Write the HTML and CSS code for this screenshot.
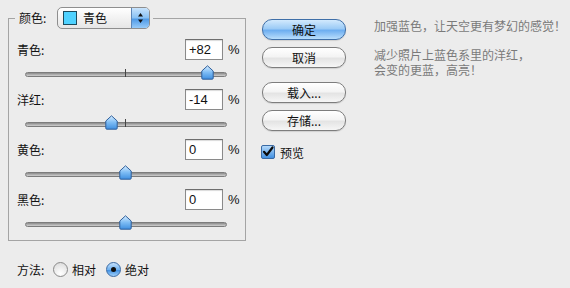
FILE: index.html
```html
<!DOCTYPE html>
<html>
<head>
<meta charset="utf-8">
<link rel="stylesheet" href="styles.css">
</head>
<body>
<div class="dialog">
  <div class="left">
    <fieldset class="group">
      <legend class="legend">
        <span class="legend-label">颜色:</span>
        <span class="popup">
          <span class="swatch"></span>
          <span class="popup-text">青色</span>
          <span class="popup-arrow">
            <svg width="17" height="22" viewBox="0 0 17 22"><path d="M8.5 6 L11 9.5 L6 9.5 Z" fill="#111"/><path d="M8.5 16 L11 12.5 L6 12.5 Z" fill="#111"/></svg>
          </span>
        </span>
      </legend>

      <div class="row">
        <div class="row-top"><span class="label">青色:</span><span class="input">+82</span><span class="pct">%</span></div>
        <div class="slider"><div class="track"></div><div class="tick"></div>
          <svg class="thumb" style="left:176px" width="13" height="15" viewBox="0 0 13 15"><defs><linearGradient id="g1" x1="0" y1="0" x2="0" y2="1"><stop offset="0" stop-color="#d6ecff"/><stop offset="0.5" stop-color="#7dbcf4"/><stop offset="1" stop-color="#3f8fe0"/></linearGradient></defs><path d="M6.5 0.8 L12.2 6 L12.2 13.2 Q12.2 14.2 11.2 14.2 L1.8 14.2 Q0.8 14.2 0.8 13.2 L0.8 6 Z" fill="url(#g1)" stroke="#2f5f9a" stroke-width="1"/></svg>
        </div>
      </div>

      <div class="row">
        <div class="row-top"><span class="label">洋红:</span><span class="input">-14</span><span class="pct">%</span></div>
        <div class="slider"><div class="track"></div><div class="tick"></div>
          <svg class="thumb" style="left:80px" width="13" height="15" viewBox="0 0 13 15"><path d="M6.5 0.8 L12.2 6 L12.2 13.2 Q12.2 14.2 11.2 14.2 L1.8 14.2 Q0.8 14.2 0.8 13.2 L0.8 6 Z" fill="url(#g1)" stroke="#2f5f9a" stroke-width="1"/></svg>
        </div>
      </div>

      <div class="row">
        <div class="row-top"><span class="label">黄色:</span><span class="input">0</span><span class="pct">%</span></div>
        <div class="slider"><div class="track"></div>
          <svg class="thumb" style="left:94px" width="13" height="15" viewBox="0 0 13 15"><path d="M6.5 0.8 L12.2 6 L12.2 13.2 Q12.2 14.2 11.2 14.2 L1.8 14.2 Q0.8 14.2 0.8 13.2 L0.8 6 Z" fill="url(#g1)" stroke="#2f5f9a" stroke-width="1"/></svg>
        </div>
      </div>

      <div class="row">
        <div class="row-top"><span class="label">黑色:</span><span class="input">0</span><span class="pct">%</span></div>
        <div class="slider"><div class="track"></div>
          <svg class="thumb" style="left:94px" width="13" height="15" viewBox="0 0 13 15"><path d="M6.5 0.8 L12.2 6 L12.2 13.2 Q12.2 14.2 11.2 14.2 L1.8 14.2 Q0.8 14.2 0.8 13.2 L0.8 6 Z" fill="url(#g1)" stroke="#2f5f9a" stroke-width="1"/></svg>
        </div>
      </div>
    </fieldset>

    <div class="method">
      <span class="label">方法:</span>
      <span class="radio"></span><span class="radio-label">相对</span>
      <span class="radio checked"><span class="dot"></span></span><span class="radio-label">绝对</span>
    </div>
  </div>

  <div class="buttons">
    <div class="btn default">确定</div>
    <div class="btn">取消</div>
    <div class="btn gap">载入...</div>
    <div class="btn">存储...</div>
    <div class="check-row">
      <svg class="checkbox" width="14" height="14" viewBox="0 0 14 14"><defs><linearGradient id="cb" x1="0" y1="0" x2="0" y2="1"><stop offset="0" stop-color="#b9dcfb"/><stop offset="1" stop-color="#3d8de0"/></linearGradient></defs><rect x="0.5" y="0.5" width="13" height="13" rx="1.5" fill="url(#cb)" stroke="#3a6aa4"/><path d="M3 6.8 L5.8 10 L11.5 2.5" fill="none" stroke="#0b0b0b" stroke-width="2.2" stroke-linecap="round" stroke-linejoin="round"/></svg>
      <span class="check-label">预览</span>
    </div>
  </div>

  <div class="notes">
    <p class="note">加强蓝色，让天空更有梦幻的感觉！</p>
    <p class="note">减少照片上蓝色系里的洋红，<br>会变的更蓝，高亮！</p>
  </div>
</div>
</body>
</html>
```

FILE: styles.css
```css
html, body {
  margin: 0;
  padding: 0;
  background: #ececec;
}
body {
  width: 570px;
  height: 288px;
  overflow: hidden;
  font-family: "Noto Sans CJK SC", "Liberation Sans", sans-serif;
  font-size: 12px;
  color: #111;
}
.dialog {
  display: flex;
  align-items: flex-start;
  padding: 7px 0 0 8px;
}
.left {
  display: flex;
  flex-direction: column;
}
.group {
  margin: 0;
  padding: 10px 7px 1px 8px;
  border: 1px solid #a4a4a4;
  width: 238px;
  box-sizing: border-box;
  min-inline-size: 0;
}
.legend {
  margin-left: -2px;
  padding: 0 3px 0 4px;
  display: flex;
  align-items: center;
  height: 22px;
}
.legend-label {
  width: 38px;
  line-height: 22px;
}
.popup {
  display: flex;
  align-items: center;
  width: 93px;
  height: 22px;
  box-sizing: border-box;
  border: 1px solid #8e8e8e;
  border-radius: 5px;
  background: linear-gradient(#ffffff, #f2f2f2 50%, #e6e6e6);
  overflow: hidden;
}
.swatch {
  width: 14px;
  height: 14px;
  box-sizing: border-box;
  margin-left: 5px;
  background: #4fd2ff;
  border: 1px solid #1c4a5c;
}
.popup-text {
  margin-left: 6px;
  flex: 1;
  line-height: 20px;
}
.popup-arrow {
  width: 17px;
  height: 22px;
  margin-top: -1px;
  margin-bottom: -1px;
  border-left: 1px solid #5c86b8;
  background: linear-gradient(#cfe7fd, #86c0f4 50%, #4f9ae6 55%, #9fd0fb);
  display: flex;
}
.row {
  display: flex;
  flex-direction: column;
}
.row-top {
  display: flex;
  align-items: center;
  height: 21px;
}
.label {
  flex: 1;
  line-height: 21px;
}
.input {
  width: 38px;
  height: 21px;
  box-sizing: border-box;
  border: 1px solid #8a8a8a;
  border-top-color: #6e6e6e;
  background: #fff;
  padding-left: 3px;
  line-height: 19px;
  font-family: "Liberation Sans", sans-serif;
  font-size: 13px;
  box-shadow: inset 0 1px 1px rgba(0,0,0,0.15);
}
.pct {
  width: 10px;
  margin-left: 5px;
  font-family: "Liberation Sans", sans-serif;
  font-size: 13px;
  line-height: 21px;
}
.slider {
  position: relative;
  height: 29px;
  margin-left: 8px;
  width: 202px;
}
.track {
  position: absolute;
  left: 0;
  top: 12px;
  width: 202px;
  height: 5px;
  box-sizing: border-box;
  border-radius: 3px;
  background: linear-gradient(#8a8a8a, #b4b4b4 60%, #d0d0d0);
  border: 1px solid #7c7c7c;
}
.tick {
  position: absolute;
  left: 100px;
  top: 9px;
  width: 1px;
  height: 8px;
  background: #444;
}
.thumb {
  position: absolute;
  top: 5px;
}
.method {
  display: flex;
  align-items: center;
  margin-top: 20px;
  padding-left: 9px;
  height: 16px;
}
.method .label {
  flex: none;
  width: 36px;
}
.radio {
  width: 15px;
  height: 15px;
  box-sizing: border-box;
  border-radius: 50%;
  border: 1px solid #8a8a8a;
  background: radial-gradient(circle at 50% 80%, #ffffff, #f0f0f0 40%, #d8d8d8);
  display: flex;
  align-items: center;
  justify-content: center;
}
.radio.checked {
  border-color: #3a6aa4;
  background: linear-gradient(#c6e2fc, #6fb1f0 50%, #3f8fe2 55%, #9fd0fb);
  margin-left: 10px;
}
.dot {
  width: 5px;
  height: 5px;
  border-radius: 50%;
  background: #0e0e0e;
}
.radio-label {
  margin-left: 4px;
}
.buttons {
  display: flex;
  flex-direction: column;
  margin-left: 16px;
  margin-top: 12px;
  width: 84px;
}
.btn {
  height: 21px;
  box-sizing: border-box;
  border: 1px solid #7d7d7d;
  border-radius: 10px;
  background: linear-gradient(#ffffff, #f4f4f4 45%, #e4e4e4 55%, #f6f6f6);
  text-align: center;
  line-height: 19px;
  margin-bottom: 7px;
  box-shadow: 0 1px 1px rgba(0,0,0,0.12);
}
.btn.default {
  border-color: #3f6fa8;
  background: linear-gradient(#d2e9fd, #9ccbf6 45%, #6eaef0 55%, #b9defc);
}
.btn.gap {
  margin-top: 7px;
}
.check-row {
  display: flex;
  align-items: center;
  margin-top: 7px;
  margin-left: -1px;
  height: 14px;
}
.check-label {
  margin-left: 5px;
}
.notes {
  margin-left: 28px;
  margin-top: 11px;
  color: #7a7a7a;
  white-space: nowrap;
}
.note {
  margin: 0 0 14px 0;
  line-height: 15px;
}
```
